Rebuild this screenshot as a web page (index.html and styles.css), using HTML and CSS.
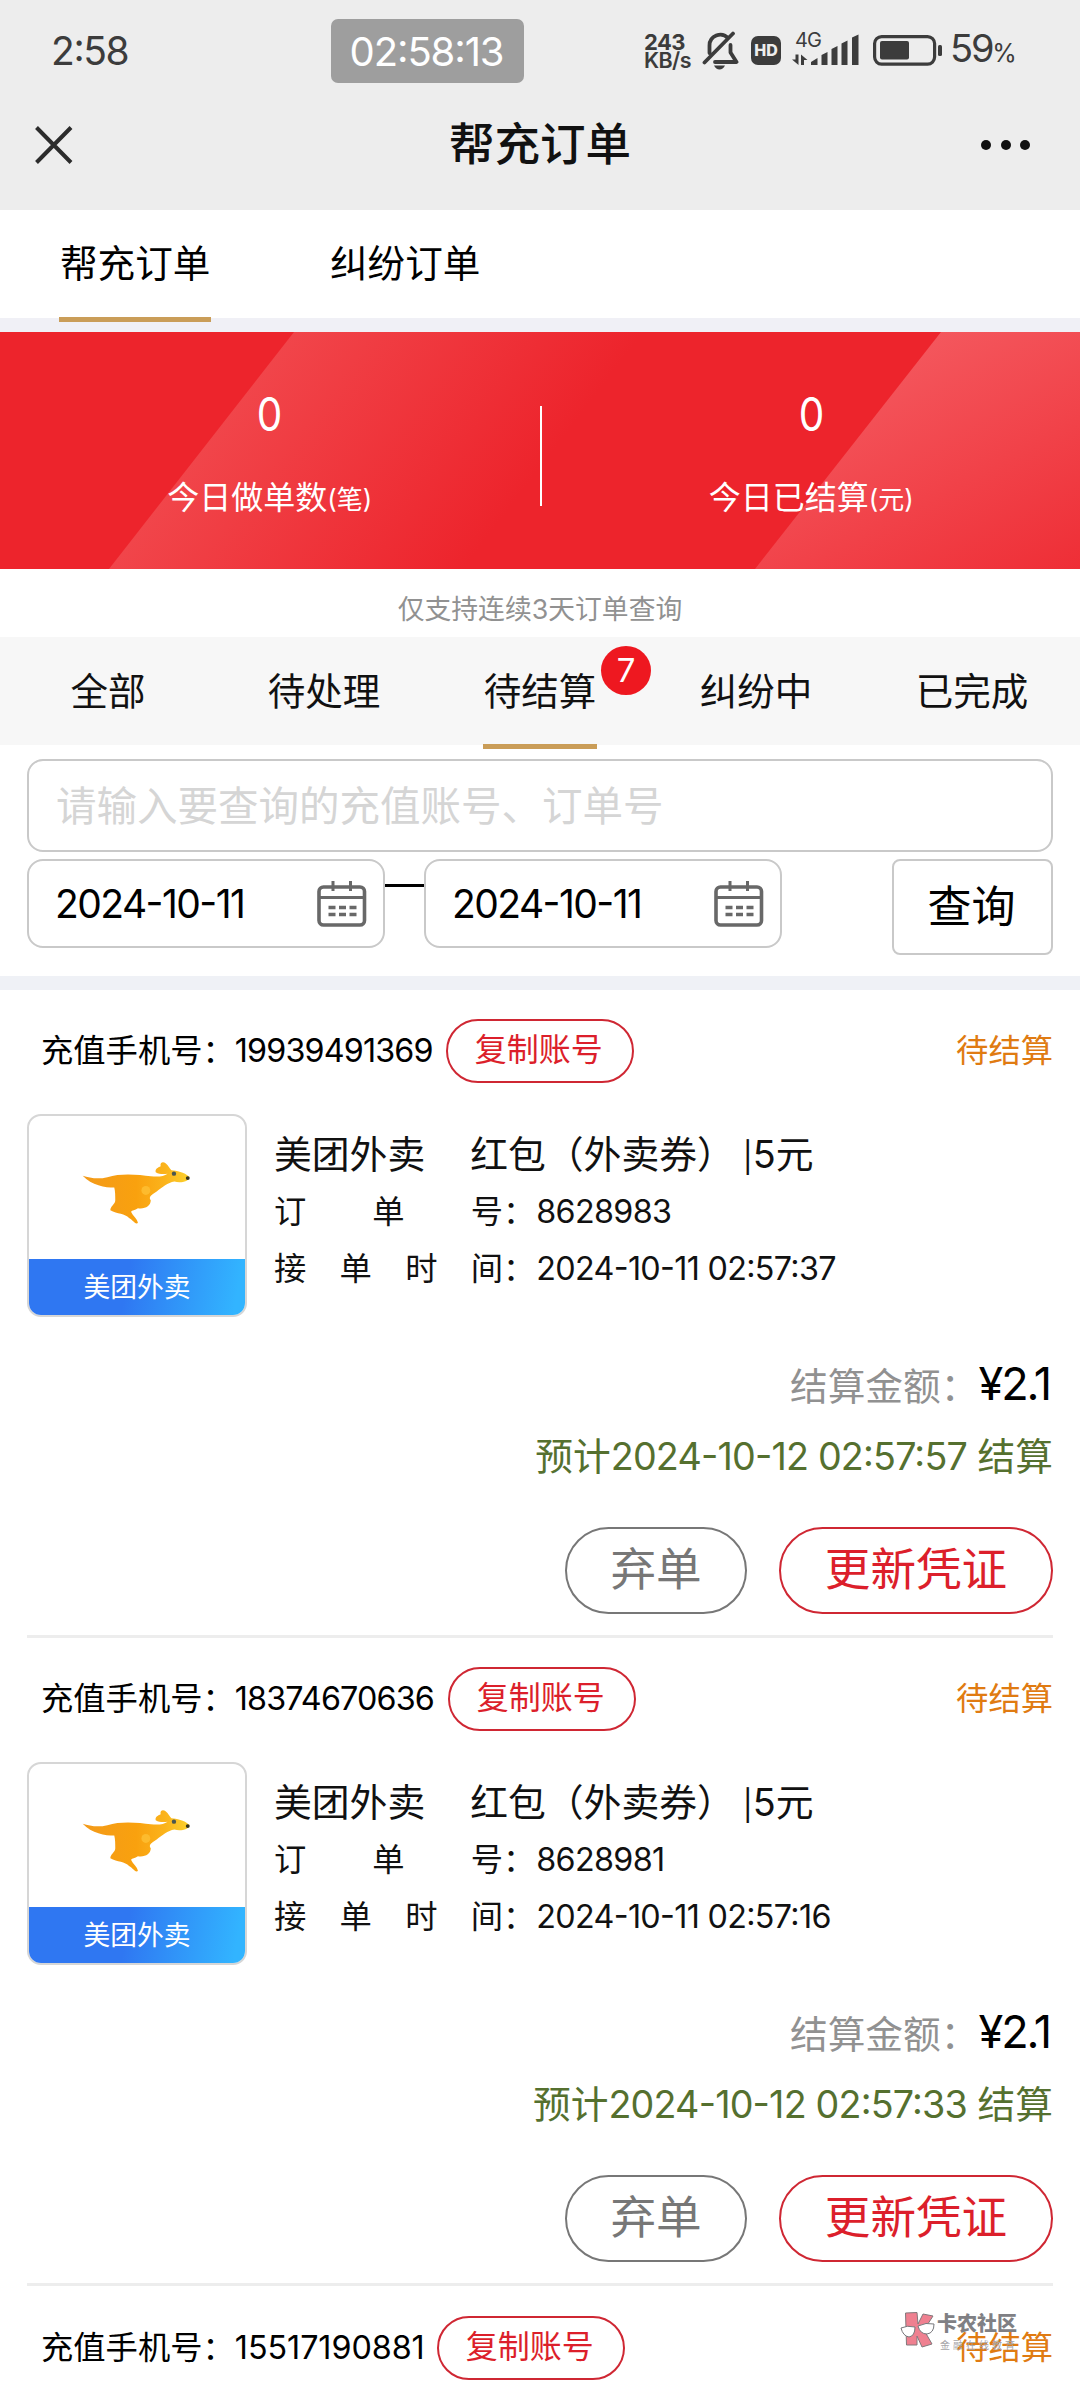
FILE: index.html
```html
<!DOCTYPE html>
<html lang="zh-CN">
<head>
<meta charset="utf-8">
<title>帮充订单</title>
<link rel="stylesheet" href="styles.css">
</head>
<body>
<svg class="defs" width="0" height="0" aria-hidden="true">
  <defs>
    <linearGradient id="fur" x1="0" y1="0" x2="1" y2="0">
      <stop offset="0" stop-color="#f39a1a"/>
      <stop offset=".5" stop-color="#f9a10e"/>
      <stop offset=".78" stop-color="#fbb41c"/>
      <stop offset="1" stop-color="#fbd12e"/>
    </linearGradient>
    <symbol id="kangaroo" viewBox="0 0 130 90">
      <path fill="url(#fur)" d="M13 26C20 28 28 30 38 27.500C52 23 70 25 82 26.500C89 27.500 95 27 99 24C96 24.500 91 25 87 22.500C86 19 90 17.500 92 16.500C91 12 95 11.500 97 13.500C100 15.500 101 19 103 20.500C108 21 116 22.500 121 27C121 32 112 34 106 32C99 33 94 38 88 42C84 45 79 47 82 51C82 57 76 60 69 59C66 61 63 61 62 62.500C64 67 68 69 69 74C66 76 64 71 60 69C56 64 48 65 41 61C41 57 46 55 46 51C46 46 46 42 45 38C36 38 22 36 13 26Z"/>
      <circle cx="77" cy="41" r="4.500" fill="#fdbb2d"/>
      <circle cx="105.500" cy="24" r="2.200" fill="#4a5750"/>
      <circle cx="119.500" cy="28.500" r="2" fill="#33321f"/>
    </symbol>
    <symbol id="calendar" viewBox="0 0 50 46">
      <g fill="none" stroke="#686868">
        <rect x="2" y="6" width="45.500" height="38" rx="4.500" stroke-width="3.600"/>
        <path stroke-width="3" d="M2 16.500H47M16 0V10M33.500 0V10"/>
        <path stroke-width="3.600" stroke-dasharray="7 3.500" d="M11.500 26.500H39.500M11.500 33.500H39.500"/>
      </g>
    </symbol>
  </defs>
</svg>

<header class="top">
  <div class="status">
    <span class="status-time">2:58</span>
    <span class="clock">02:58:13</span>
    <div class="status-right">
      <span class="speed"><b>243</b><b class="unit">KB/s</b></span>
      <svg class="bell" width="38" height="40" viewBox="0 0 38 40">
        <g fill="none" stroke="#3c3c3c" stroke-width="3.800" stroke-linecap="round" stroke-linejoin="round">
          <path d="M7.500 22V14.500A10.800 10.800 0 0 1 26 7M28.500 14V21.500L34.500 31H13M2.500 31.500L31 2.500"/>
        </g>
        <path fill="#3c3c3c" d="M12 34.500H23Q21 38.500 17.500 38.500T12 34.500Z"/>
      </svg>
      <span class="hd">HD</span>
      <div class="signal">
        <span class="net">4G</span>
        <svg width="68" height="34" viewBox="0 0 68 34">
          <g fill="#3c3c3c">
            <path d="M3.500 20.500H6.500V31L0 25.500H3.500ZM9 20.500L15.500 26H12V31H9Z"/>
            <path d="M19 31V28L25.500 24V31ZM29.500 31V21L35.500 18V31ZM39.500 31V15L45.500 12V31ZM49.500 31V9.500L55.500 6.500V31ZM60 31V3.500L66.500 .5V31Z"/>
          </g>
        </svg>
      </div>
      <svg class="battery" width="70" height="32" viewBox="0 0 70 32">
        <rect x="1.600" y="1.600" width="60" height="27.500" rx="7" fill="none" stroke="#3c3c3c" stroke-width="3.200"/>
        <rect x="7" y="6" width="29" height="18.500" rx="2" fill="#3c3c3c"/>
        <rect x="65" y="10" width="4" height="11" rx="1.500" fill="#3c3c3c"/>
      </svg>
      <span class="percent">59<small>%</small></span>
    </div>
  </div>
  <div class="nav">
    <svg width="40" height="40" viewBox="0 0 40 40"><path d="M2.500 2.500L37 37.500M37 2.500L2.500 37.500" stroke="#2c2c2c" stroke-width="4"/></svg>
    <h1>帮充订单</h1>
    <span class="more"><i></i><i></i><i></i></span>
  </div>
</header>

<nav class="main-tabs">
  <a class="active">帮充订单</a>
  <a>纠纷订单</a>
</nav>

<section class="banner">
  <svg class="banner-bg" viewBox="0 0 1080 237" preserveAspectRatio="none">
    <defs>
      <linearGradient id="sheen1" gradientUnits="userSpaceOnUse" x1="250" y1="40" x2="480" y2="215">
        <stop offset="0" stop-color="#f1464b"/><stop offset="1" stop-color="#ed242c"/>
      </linearGradient>
      <linearGradient id="sheen2" gradientUnits="userSpaceOnUse" x1="920" y1="0" x2="1060" y2="270">
        <stop offset="0" stop-color="#f4585e"/><stop offset="1" stop-color="#ee2b33"/>
      </linearGradient>
    </defs>
    <path fill="#ed242c" d="M0 0H1080V237H0Z"/>
    <path fill="url(#sheen1)" d="M294 0H941L755 237H109Z"/>
    <path fill="url(#sheen2)" d="M941 0H1080V237H755Z"/>
  </svg>
  <div class="stat"><strong>0</strong><span>今日做单数<small>(笔)</small></span></div>
  <div class="bar"></div>
  <div class="stat"><strong>0</strong><span>今日已结算<small>(元)</small></span></div>
</section>

<p class="hint">仅支持连续3天订单查询</p>

<nav class="filters">
  <a>全部</a>
  <a>待处理</a>
  <a class="active">待结算<em>7</em></a>
  <a>纠纷中</a>
  <a>已完成</a>
</nav>

<section class="search">
  <div class="field">请输入要查询的充值账号、订单号</div>
  <div class="dates">
    <div class="date"><span>2024-10-11</span><svg width="50" height="46"><use href="#calendar"/></svg></div>
    <div class="dash"></div>
    <div class="date"><span>2024-10-11</span><svg width="50" height="46"><use href="#calendar"/></svg></div>
    <button class="query">查询</button>
  </div>
</section>

<main class="orders">
  <article class="order">
    <div class="head"><span class="phone">充值手机号：<b style="width:197px">19939491369</b></span><button class="copy">复制账号</button><span class="state">待结算</span></div>
    <div class="body">
      <div class="thumb"><svg width="130" height="90"><use href="#kangaroo"/></svg><span>美团外卖</span></div>
      <div class="info">
        <h2><span>美团外卖</span><span>红包（外卖券）<span class="rule">|</span>5元</span></h2>
        <p><span class="label"><i>订</i><i>单</i><i>号</i></span>：<b>8628983</b></p>
        <p><span class="label"><i>接</i><i>单</i><i>时</i><i>间</i></span>：<b>2024-10-11 02:57:37</b></p>
      </div>
    </div>
    <div class="sum">结算金额：<b>¥2.1</b></div>
    <div class="eta">预计<b>2024-10-12 02:57:57</b> 结算</div>
    <div class="actions"><button class="drop">弃单</button><button class="update">更新凭证</button></div>
  </article>

  <article class="order">
    <div class="head"><span class="phone">充值手机号：<b style="width:199px">18374670636</b></span><button class="copy">复制账号</button><span class="state">待结算</span></div>
    <div class="body">
      <div class="thumb"><svg width="130" height="90"><use href="#kangaroo"/></svg><span>美团外卖</span></div>
      <div class="info">
        <h2><span>美团外卖</span><span>红包（外卖券）<span class="rule">|</span>5元</span></h2>
        <p><span class="label"><i>订</i><i>单</i><i>号</i></span>：<b>8628981</b></p>
        <p><span class="label"><i>接</i><i>单</i><i>时</i><i>间</i></span>：<b>2024-10-11 02:57:16</b></p>
      </div>
    </div>
    <div class="sum">结算金额：<b>¥2.1</b></div>
    <div class="eta">预计<b>2024-10-12 02:57:33</b> 结算</div>
    <div class="actions"><button class="drop">弃单</button><button class="update">更新凭证</button></div>
  </article>

  <article class="order cut">
    <div class="head"><span class="phone">充值手机号：<b class="loose" style="width:188px">15517190881</b></span><button class="copy">复制账号</button><span class="state">待结算</span></div>
  </article>
</main>

<div class="watermark">
  <svg width="36" height="36" viewBox="0 0 36 36">
    <path d="M5.500 1L17 .5L18 12L23 2L33 4L24 18L32 32L22 35L17 24V33H6.500Z" fill="#ef8090" stroke="#82787c"/>
    <path d="M1 16Q7 13 15 15Q15 24 9 25Q3 24 1 16ZM18 14Q26 10 34 12Q34 21 27 22Q20 22 18 14Z" fill="#fff" stroke="#77777b"/>
  </svg>
  <div><strong>卡农社区</strong><span>金融在线教育</span></div>
</div>
</body>
</html>
```

FILE: styles.css
```css
* { box-sizing: border-box; }

body {
  margin: 0;
  width: 1080px;
  height: 2400px;
  position: relative;
  overflow: hidden;
  background: #fff;
  color: #111;
  font-family: Inter, "Noto Sans CJK SC", sans-serif;
  font-feature-settings: "case" 1;
}

b, i, em { font-weight: inherit; font-style: normal; }
h1, h2, p { margin: 0; font-weight: 400; }
button { padding: 0; background: none; font-family: inherit; font-feature-settings: inherit; line-height: 1; }
.defs { position: absolute; }

/* Status bar and title */
.top { height: 210px; background: #ededed; color: #3c3c3c; }
.status {
  display: grid;
  grid-template-columns: 331px 193px 1fr;
  height: 101px;
  align-items: center;
}
.status-time { padding-left: 51px; font-size: 39px; line-height: 40px; letter-spacing: -1.4px; }
.clock {
  height: 64px;
  border-radius: 7px;
  background: #9e9e9e;
  color: #fff;
  padding-right: 2px;
  font-size: 40px;
  line-height: 65px;
  text-align: center;
  letter-spacing: -1.1px;
}
.status-right { display: flex; align-items: center; padding-left: 120px; }
.speed { display: flex; flex-direction: column; width: 58px; font-size: 22px; line-height: 18px; font-weight: 700; letter-spacing: -.6px; }
.speed .unit { font-size: 21.500px; font-weight: 600; }
.bell { margin-right: 11px; }
.hd {
  width: 30px; height: 29px;
  margin-right: 11px;
  border-radius: 7px;
  background: #3c3c3c;
  color: #ededed;
  font-size: 16px; font-weight: 800; line-height: 29px;
  text-align: center;
}
.signal { position: relative; width: 81px; height: 34px; }
.net { position: absolute; left: 3px; top: -4px; font-size: 20px; line-height: 20px; letter-spacing: -1px; }
.battery { margin-right: 7px; }
.percent { font-size: 38px; line-height: 40px; letter-spacing: -2.2px; }
.percent small { font-size: 25px; }
.nav {
  display: grid;
  grid-template-columns: 1fr auto 1fr;
  align-items: center;
  height: 88px;
  padding: 0 50px 0 34px;
}
.nav h1 { margin-left: 16px; color: #111; font-size: 45.500px; line-height: 60px; font-weight: 500; }
.more { display: flex; gap: 9.500px; justify-self: end; }
.more i { width: 10px; height: 10px; border-radius: 50%; background: #111; }

/* Tabs */
.main-tabs {
  display: flex;
  gap: 118px;
  height: 122px;
  padding-left: 59px;
  background: linear-gradient(#fff 108px, #f0f0f6 108px);
}
.main-tabs a { height: 112px; width: 152px; padding-left: 1px; color: #000; font-size: 37.600px; line-height: 108px; white-space: nowrap; }
.main-tabs .active { border-bottom: 5px solid #ca9d58; }

.banner {
  position: relative;
  display: grid;
  grid-template-columns: 1fr 3px 1fr;
  height: 237px;
  color: #fff;
}
.banner-bg { position: absolute; inset: 0; width: 100%; height: 100%; z-index: -1; }
.stat { display: flex; flex-direction: column; align-items: center; padding-left: 1px; }
.stat strong { margin-top: 54px; font-size: 46px; line-height: 56px; font-weight: 400; transform: scaleX(.88); }
.stat span { margin-top: 36px; font-size: 32px; line-height: 40px; }
.stat small { font-size: 26px; }
.bar { width: 2px; height: 100px; margin: 74px 0 0 1px; background: #fff; }

.hint { height: 68px; color: #919191; font-size: 26.800px; line-height: 80px; text-align: center; }

.filters { display: grid; grid-template-columns: repeat(5, 1fr); justify-items: center; height: 108px; background: #f7f7f7; }
.filters a { position: relative; height: 112px; font-size: 37.500px; line-height: 110px; color: #111; }
.filters .active { width: 114px; text-align: center; border-bottom: 5px solid #ca9d58; }
.filters em {
  position: absolute;
  left: 118px; top: 9px;
  width: 50px; height: 49px;
  border-radius: 50%;
  background: #ee1820;
  color: #fff;
  font-size: 33px; line-height: 49px;
}

/* Query form */
.search { height: 245px; padding: 14px 27px 0; border-bottom: 14px solid #eff1f6; }
.field, .date { border: 2px solid #c9c9c9; border-radius: 16px; }
.field { height: 93px; padding-left: 27px; color: #d5d5d5; font-size: 40.500px; line-height: 91px; }
.dates { display: flex; margin-top: 7px; align-items: flex-start; }
.date { display: flex; align-items: center; justify-content: space-between; width: 358px; height: 89px; padding: 0 16px 0 26px; color: #000; font-size: 39px; line-height: 84px; letter-spacing: -1.550px; }
.dash { width: 39px; height: 3px; margin-top: 25px; background: #000; }
.query { width: 161px; height: 96px; margin-left: auto; padding: 0 2px 1px 0; border: 2px solid #c9c9c9; border-radius: 8px; font-size: 44px; color: #000; }

/* Orders */
.order { height: 648px; margin: 0 27px; border-bottom: 3px solid #ededed; padding-top: 29px; }
.order.cut { height: 114px; padding-top: 30px; border: 0; }
.head { display: flex; height: 64px; padding-left: 14px; font-size: 32.300px; line-height: 64px; color: #000; }
.phone { display: flex; }
.phone b { margin-right: 14px; letter-spacing: -.850px; white-space: nowrap; }
.phone .loose { letter-spacing: -.050px; }
.copy { width: 188px; height: 64px; padding: 0 2px 2px 0; border: 2px solid #cf2733; border-radius: 32px; color: #dc1f2b; font-size: 32px; }
.state { margin-left: auto; color: #e07b12; }
.body { display: flex; margin-top: 31px; height: 203px; }
.thumb { display: flex; flex-direction: column; width: 220px; height: 203px; border: 2px solid #d6d6d6; border-radius: 14px; overflow: hidden; }
.thumb svg { margin: 34px 0 20px 40px; }
.thumb span { height: 57px; background: linear-gradient(100deg, #2f77f2 45%, #32b4ff 95%); color: #fff; font-size: 26.800px; line-height: 56px; text-align: center; }
.info { padding: 16px 0 0 27px; color: #111; }
.info h2 { display: flex; gap: 45px; height: 50px; font-size: 37.800px; line-height: 49px; }
.rule { margin: 0 2px 0 8px; font-size: 30px; line-height: 1; letter-spacing: -2px; }
.info p { display: flex; height: 57px; font-size: 32.300px; line-height: 64px; }
.info p b { margin-left: 1px; letter-spacing: -.680px; }
.label { display: flex; justify-content: space-between; width: 229px; }
.sum { margin-top: 44px; height: 46px; color: #919191; font-size: 37.700px; line-height: 46px; text-align: right; }
.sum b { margin-right: 3px; color: #000; font-size: 45px; letter-spacing: -2px; }
.eta { margin-top: 26px; height: 46px; color: #55702f; font-size: 37.700px; line-height: 46px; text-align: right; }
.eta b { letter-spacing: -.820px; }
.actions { display: flex; justify-content: flex-end; gap: 32px; margin-top: 48px; }
.actions button { height: 87px; border-radius: 44px; padding-bottom: 1px; font-size: 45.600px; }
.drop { width: 182px; border: 2px solid #777; color: #777; }
.update { width: 274px; border: 2px solid #cf2733; color: #dc1f2b; }

.watermark { position: absolute; left: 900px; top: 2312px; display: flex; gap: 1px; color: #808084; }
.watermark div { display: flex; flex-direction: column; }
.watermark strong { font-size: 20px; line-height: 24px; font-weight: 900; }
.watermark span { margin-left: 3px; font-size: 10px; line-height: 18px; letter-spacing: 3px; color: #a5a5a8; }
```
